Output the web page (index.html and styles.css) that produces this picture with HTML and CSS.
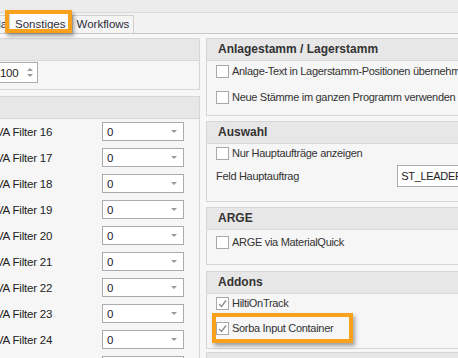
FILE: index.html
```html
<!DOCTYPE html>
<html lang="de">
<head>
  <meta charset="UTF-8" />
  <title>Sonstiges</title>
  <link rel="stylesheet" href="styles.css">
</head>
<body>

  <div class="topbar"></div>

  <div class="tabstrip">
    <div class="tab tab-cut">Formula</div>
    <div class="tab tab-active">Sonstiges</div>
    <div class="tab">Workflows</div>
  </div>

  <div class="page">
    <div class="col-left">
      <div class="group">
        <div class="group-head"></div>
        <div class="group-body spin-body">
          <div class="spin">
            <span>100</span>
            <span class="spin-btns"><i class="up"></i><i class="down"></i></span>
          </div>
        </div>
      </div>

      <div class="group group-next">
        <div class="group-head"></div>
        <div class="group-body filters" id="filters"></div>
      </div>
    </div>

    <div class="col-right">
      <div class="group">
        <div class="group-head">Anlagestamm / Lagerstamm</div>
        <div class="group-body stamm">
          <label class="check-row"><span class="cb"></span>Anlage-Text in Lagerstamm-Positionen übernehmen</label>
          <label class="check-row"><span class="cb"></span>Neue Stämme im ganzen Programm verwenden</label>
        </div>
      </div>

      <div class="group group-gap">
        <div class="group-head">Auswahl</div>
        <div class="group-body auswahl">
          <label class="check-row short"><span class="cb"></span>Nur Hauptaufträge anzeigen</label>
          <div class="field-row">
            <span class="field-label">Feld Hauptauftrag</span>
            <span class="textbox">ST_LEADER</span>
          </div>
        </div>
      </div>

      <div class="group group-gap">
        <div class="group-head">ARGE</div>
        <div class="group-body arge">
          <label class="check-row"><span class="cb"></span>ARGE via MaterialQuick</label>
        </div>
      </div>

      <div class="group group-addons">
        <div class="group-head">Addons</div>
        <div class="group-body addons">
          <label class="check-row short"><span class="cb checked"><svg width="11" height="11" viewBox="0 0 11 11"><polyline points="2,6 4.5,8.5 9,2.5" fill="none" stroke="#8a8a8a" stroke-width="1.3"/></svg></span>HiltiOnTrack</label>
          <label class="check-row"><span class="cb checked"><svg width="11" height="11" viewBox="0 0 11 11"><polyline points="2,6 4.5,8.5 9,2.5" fill="none" stroke="#8a8a8a" stroke-width="1.3"/></svg></span>Sorba Input Container</label>
        </div>
      </div>

      <div class="group group-last">
        <div class="group-head"></div>
      </div>
    </div>
  </div>

  <div class="mark mark-tab"></div>
  <div class="mark mark-sorba"></div>

  <script>
    const filters = document.getElementById('filters');
    for (let n = 16; n <= 25; n++) {
      const row = document.createElement('div');
      row.className = 'filter-row';
      row.innerHTML = '<span class="filter-label">VA Filter ' + n + '</span>' +
        '<span class="combo">0<i class="arrow"></i></span>';
      filters.appendChild(row);
    }
  </script>
</body>
</html>
```

FILE: styles.css
```css
body {
  margin: 0;
  width: 458px;
  height: 358px;
  overflow: hidden;
  position: relative;
  background: #f7f7f7;
  font-family: "Liberation Sans", Arial, sans-serif;
  font-size: 11px;
  letter-spacing: -0.3px;
  color: #333;
}

.topbar {
  height: 12px;
  background: #ececec;
  border-bottom: 1px solid #dadada;
}

.tabstrip {
  display: flex;
  align-items: flex-end;
  height: 20px;
  background: #f2f2f2;
  border-bottom: 1px solid #c8c8c8;
}

.tab {
  height: 17px;
  line-height: 17px;
  padding: 0 4px;
  border: 1px solid #d0d0d0;
  border-bottom: none;
  background: #f4f4f4;
  color: #2d2d3a;
  font-size: 11.5px;
  letter-spacing: 0;
}

.tab-cut {
  margin-left: -40px;
  width: 37px;
  text-align: right;
  padding-right: 6px;
  overflow: hidden;
}

.tab-active {
  height: 19px;
  line-height: 20px;
  background: #fbfbfb;
  padding: 0 5px;
}

.page {
  display: flex;
  gap: 6px;
  padding-top: 4px;
}

.col-left {
  flex: none;
  width: 220px;
  margin-left: -20px;
}

.col-right {
  flex: none;
  width: 280px;
}

.group {
  border: 1px solid #d6d6d6;
  background: #f6f6f6;
}

.group-next {
  margin-top: 6px;
}

.group-gap {
  margin-top: 5px;
}

.group-addons {
  margin-top: 6px;
}

.group-last {
  margin-top: 3px;
}

.group-head {
  height: 21px;
  line-height: 21px;
  padding-left: 11px;
  background: #e7e7e7;
  border-bottom: 1px solid #d8d8d8;
  font-size: 12px;
  font-weight: bold;
  letter-spacing: 0;
  color: #333;
}

.group-body {
  padding-left: 9px;
}

.spin-body {
  height: 28px;
  padding: 1px 0 0 8px;
  box-sizing: border-box;
}

.spin {
  display: flex;
  align-items: center;
  justify-content: space-between;
  width: 49px;
  height: 21px;
  box-sizing: border-box;
  border: 1px solid #ababab;
  background: #fff;
  padding: 0 4px 0 10px;
  font-size: 11.5px;
  color: #222;
}

.spin-btns {
  display: flex;
  flex-direction: column;
  gap: 3px;
}

.spin-btns i {
  width: 0;
  height: 0;
  border-left: 3px solid transparent;
  border-right: 3px solid transparent;
}

.spin-btns .up {
  border-bottom: 3px solid #999;
}

.spin-btns .down {
  border-top: 3px solid #999;
}

.filters {
  padding: 3px 0 0 15px;
  display: flex;
  flex-direction: column;
  gap: 7px;
}

.filter-row {
  display: flex;
  align-items: center;
  height: 19px;
}

.filter-label {
  width: 106px;
  font-size: 11.5px;
  color: #222;
  letter-spacing: -0.2px;
}

.combo {
  display: flex;
  align-items: center;
  justify-content: space-between;
  width: 82px;
  height: 19px;
  box-sizing: border-box;
  border: 1px solid #ababab;
  background: #fff;
  padding: 0 6px 0 4px;
  font-size: 11.5px;
  color: #222;
}

.arrow {
  width: 0;
  height: 0;
  border-left: 3px solid transparent;
  border-right: 3px solid transparent;
  border-top: 3px solid #999;
}

.check-row {
  display: flex;
  align-items: center;
  gap: 3px;
  height: 20px;
  white-space: nowrap;
  color: #333;
}

.check-row.short {
  height: 18px;
}

.cb {
  flex: none;
  width: 13px;
  height: 13px;
  box-sizing: border-box;
  border: 1px solid #a8a8a8;
  background: #fff;
  display: flex;
  align-items: center;
  justify-content: center;
}

.stamm {
  display: flex;
  flex-direction: column;
  gap: 6px;
  padding-bottom: 8px;
}

.auswahl {
  display: flex;
  flex-direction: column;
  gap: 3px;
  padding-bottom: 14px;
}

.field-row {
  display: flex;
  align-items: center;
  height: 22px;
}

.field-label {
  width: 186px;
}

.textbox {
  width: 90px;
  height: 22px;
  box-sizing: border-box;
  border: 1px solid #ababab;
  background: #fff;
  padding-left: 3px;
  line-height: 20px;
  color: #222;
}

.arge {
  padding-top: 2px;
  padding-bottom: 12px;
}

.addons {
  display: flex;
  flex-direction: column;
  gap: 6px;
  padding-bottom: 10px;
}

.mark {
  position: absolute;
  box-sizing: border-box;
  border: 4px solid #f7a11c;
  box-shadow: 2px 3px 4px rgba(0, 0, 0, 0.35);
}

.mark-tab {
  left: 5px;
  top: 10px;
  width: 67px;
  height: 23px;
}

.mark-sorba {
  left: 212px;
  top: 313px;
  width: 141px;
  height: 30px;
}
```
